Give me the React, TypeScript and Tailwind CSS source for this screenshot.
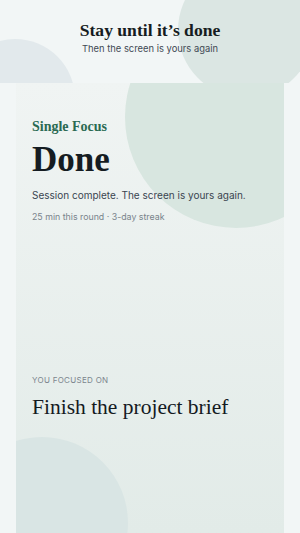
import React from 'react';

const serif = { fontFamily: '"Liberation Serif", "DejaVu Serif", serif' };

const Header: React.FC = () => (
  <div className="relative h-[83px] overflow-hidden flex flex-col items-center pt-[19px]">
    {/* background blobs */}
    <div className="absolute left-[-45px] top-[39px] w-[120px] h-[120px] rounded-full bg-[#e2e9ec]" />
    <div className="absolute left-[178px] top-[-38px] w-[136px] h-[136px] rounded-full bg-[#dbe6e3]" />
    <h1 className="relative z-10 text-[17.6px] font-bold leading-[22px] text-[#161c21]" style={serif}>
      Stay until it’s done
    </h1>
    <p className="relative z-10 mt-[1px] text-[9.4px] leading-[14px] text-[#3f4a54] font-['Inter',sans-serif]">
      Then the screen is yours again
    </p>
  </div>
);

const App: React.FC = () => {
  return (
    <div className="w-[300px] h-[533px] overflow-hidden bg-[#f2f6f6] font-['Inter',sans-serif]">
      <Header />
      <div className="relative mx-4 h-[450px] overflow-hidden bg-gradient-to-b from-[#f0f4f3] to-[#e2ebe8]">
        <div className="absolute left-[109px] top-[-77px] w-[222px] h-[222px] rounded-full bg-[#d8e6e0]" />
        <div className="absolute left-[-60px] top-[354px] w-[172px] h-[172px] rounded-full bg-[#d9e5e4]" />

        <div className="relative z-10 flex flex-col px-4 pt-[35px]">
          <div className="text-[14px] font-bold leading-[18px] text-[#2a6a53]" style={serif}>
            Single Focus
          </div>
          <div className="mt-[6px] text-[35px] font-bold leading-[36px] text-[#151c22]" style={serif}>
            Done
          </div>
          <p className="mt-[10px] text-[10px] leading-[14px] text-[#3a4550]">
            Session complete. The screen is yours again.
          </p>
          <p className="mt-[9px] text-[8.8px] leading-[12px] text-[#79838b]">
            25 min this round · 3-day streak
          </p>

          <div className="mt-[151px] text-[8px] leading-[12px] tracking-[0.3px] uppercase text-[#7b858d]">
            You focused on
          </div>
          <div className="mt-[9px] text-[21.5px] leading-[24px] text-[#141a1f]" style={serif}>
            Finish the project brief
          </div>
        </div>
      </div>
    </div>
  );
};

export default App;
